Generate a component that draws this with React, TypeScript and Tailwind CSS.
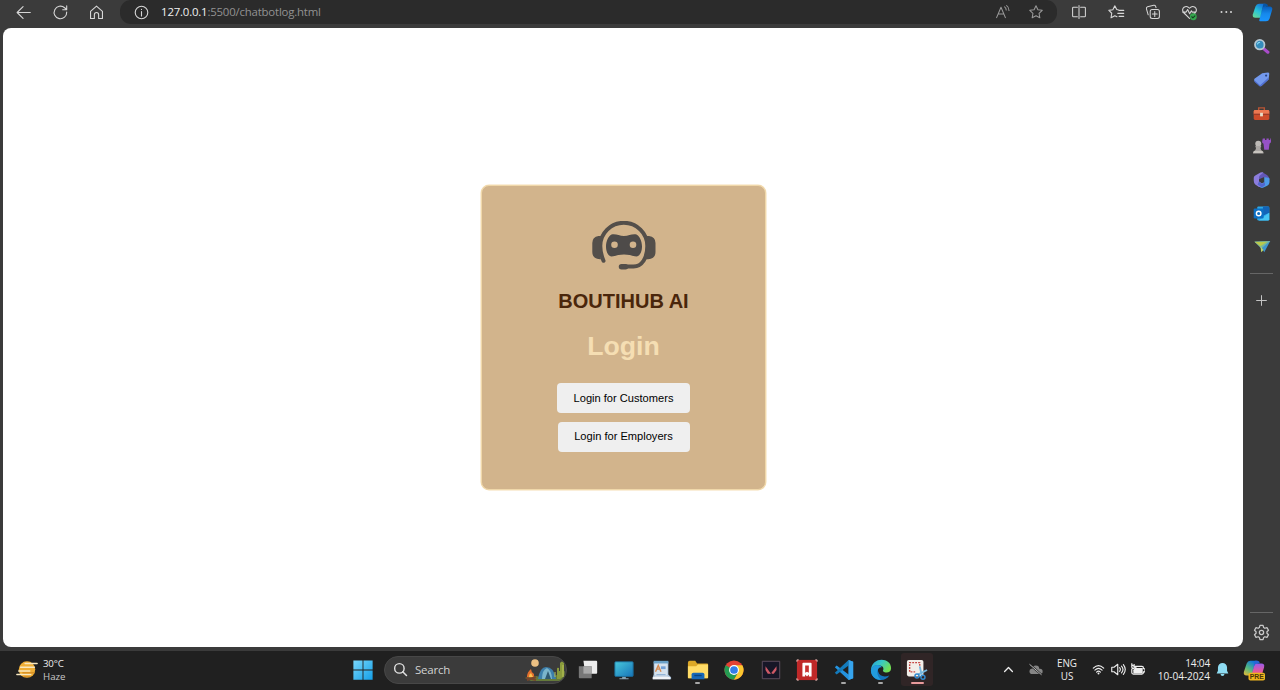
import React from "react";

type P = { children: React.ReactNode; size?: number; className?: string };

/* 20-unit outline icon */
const Line = ({ children, size = 16, className = "" }: P) => (
  <svg width={size} height={size} viewBox="0 0 20 20" fill="none" stroke="currentColor" strokeWidth="1.3" strokeLinecap="round" strokeLinejoin="round" className={`shrink-0 ${className}`}>
    {children}
  </svg>
);

/* 24-unit full colour icon */
const Art = ({ children, size = 22, className = "" }: P) => (
  <svg width={size} height={size} viewBox="0 0 24 24" className={`shrink-0 ${className}`}>
    {children}
  </svg>
);

const Cell = ({ children }: { children: React.ReactNode }) => (
  <div className="flex h-6 w-[36.7px] shrink-0 items-center justify-center">{children}</div>
);

const star = "M10 2.2l2.4 5 5.4.7-4 3.8 1 5.5L10 14.6l-4.8 2.6 1-5.5-4-3.8 5.4-.7z";

function Toolbar() {
  return (
    <header className="flex h-[28px] shrink-0 items-start bg-[#3b3b3b] pl-[5px] text-[#d6d6d6]">
      <Cell><Line size={17}><path d="M18 10H2.500M9.500 3L2.500 10l7 7" /></Line></Cell>
      <Cell><Line size={17}><path d="M17.300 9.500A7.400 7.400 0 1 1 14.800 4.400L17.200 6.500M17.300 2v4.700h-4.700" /></Line></Cell>
      <Cell><Line size={17}><path d="M3 8.600L10 2.500l7 6.100V17h-4.500v-4.500a2.500 2.500 0 0 0-5 0V17H3z" /></Line></Cell>
      <div className="ml-[5px] flex h-6 w-[937px] items-center rounded-[11px] bg-[#2b2b2b] pl-[13px]">
        <Line size={17}><circle cx="10" cy="10" r="7.400" /><path d="M10 9v5M10 6.300v.2" /></Line>
        <div className="ml-[11px] h-[18px] w-[162px] whitespace-nowrap font-['Open_Sans','Noto_Sans',sans-serif] text-[11.4px] leading-[18px] tracking-[-0.19px] text-[#929292]">
          <span className="text-[#f1f1f1]">127.0.0.1</span>:5500/chatbotlog.html
        </div>
        <div className="ml-auto mr-[13px] flex gap-[17px] text-[#9a9a9a]">
          <Line size={16}><path d="M2 17L7.500 4 13 17M4 12.500h7M12 3.500q2 1.500 2 4M14.500 2q3 2 3 6" /></Line>
          <Line size={16}><path d={star} /></Line>
        </div>
      </div>
      <div className="w-1" />
      <Cell><Line size={16}><path d="M8 4H3q-1 0-1 1v10q0 1 1 1h5M12 4h5q1 0 1 1v10q0 1-1 1h-5M10 2v16" /></Line></Cell>
      <Cell><Line size={17}><path d="M12.500 7L10.300 6.500 8 2.200 5.700 6.700l-4.700.8 3.400 3.400-.8 5.300L8 13.800l2.500 1.200M13 7.500h5.500M11.500 11h7M13 14.500h5.500" /></Line></Cell>
      <Cell><Line size={16}><rect x="6.500" y="7" width="11.500" height="11" rx="2.500" /><path d="M12.200 9.500v6M9.200 12.500h6M4 13.500L1.800 6q-.4-2 1.400-2.600L11 1.700q1.700-.3 2.300 1.300l.5 1.500" /></Line></Cell>
      <Cell>
        <Line size={17}>
          <path d="M10 17L3 10C-.8 5 6 .3 10 5c4-4.700 10.800 0 7 5l-2 2M2 9.500h4l1.800-3 2.400 5 2-3.500 1 1.500h4" />
          <circle cx="14.500" cy="15" r="4" fill="#35a64e" stroke="none" /><path d="M12.700 15l1.300 1.300 2.400-2.400" stroke="#163d20" />
        </Line>
      </Cell>
      <Cell><svg width="16" height="16" viewBox="0 0 16 16" fill="currentColor"><circle cx="3.500" cy="8" r="1" /><circle cx="8.300" cy="8" r="1" /><circle cx="13" cy="8" r="1" /></svg></Cell>
      <div className="flex h-[25px] flex-1 items-center justify-center"><Copilot size={21} /></div>
    </header>
  );
}

function Copilot({ size, pro = false }: { size: number; pro?: boolean }) {
  const id = pro ? "pro" : "std";
  return (
    <Art size={size}>
      <defs>
        <linearGradient id={`${id}a`} x1="0" y1="1" x2="0.600" y2="0"><stop stopColor={pro ? "#f2b92f" : "#70dc8f"} /><stop offset=".5" stopColor={pro ? "#53ba80" : "#29c5d8"} /><stop offset="1" stopColor="#1475da" /></linearGradient>
        <linearGradient id={`${id}b`} x1="0" y1="1" x2="0" y2="0"><stop stopColor={pro ? "#f29755" : "#1995ff"} /><stop offset=".5" stopColor={pro ? "#e5599b" : "#1689ec"} /><stop offset="1" stopColor={pro ? "#9a5bea" : "#075cba"} /></linearGradient>
      </defs>
      <path d="M8 2h7q1.500 0 1 2L13 15q-1 3-3 3H4q-4 0-3-4L4 5q1-3 4-3z" fill={`url(#${id}a)`} />
      <path d="M15 5h5q4 0 3 4l-3 10q-1 3-4 3H9q-1 0-.5-2L12 8q1-3 3-3z" fill={`url(#${id}b)`} />
      <path d="M13 2h3q2 0 2.500 3H15q-2 0-3 3l-2.500 9" fill={pro ? "#2965d5" : "#0755a5"} />
      {pro && (
        <>
          <rect x="6" y="15" width="18" height="8.500" rx="2" fill="#efb51e" />
          <text x="15" y="21.800" textAnchor="middle" fontFamily="Liberation Sans, sans-serif" fontSize="7.500" fontWeight="700" fill="#4c3508">PRE</text>
        </>
      )}
    </Art>
  );
}

const SideCell = ({ children }: { children: React.ReactNode }) => (
  <div className="flex h-[33.4px] w-full shrink-0 items-center justify-center">{children}</div>
);

function Sidebar() {
  return (
    <aside className="flex w-[37px] shrink-0 flex-col items-center bg-[#3b3b3b] pt-[1.6px] text-[#c9c9c9]">
      <SideCell><Art size={17}><path d="M15 15l6 5" stroke="#a94bc9" strokeWidth="4.500" strokeLinecap="round" /><circle cx="9.500" cy="9.500" r="6.700" fill="#348bbb" stroke="#b4c6d1" strokeWidth="2.500" /><path d="M6 9q1-3 4-3" stroke="#8ddcf7" strokeWidth="1.500" fill="none" /></Art></SideCell>
      <SideCell><Art size={17}><path d="M13 3l8-1q2 0 2 2l-1 8-10 9q-2 1-3 0l-7-7q-1-1 0-3z" fill="#7399ed" /><path d="M2 13l8 7L22 9v3L12 21q-2 1-3 0l-7-6z" fill="#506fd1" /><circle cx="18.500" cy="6.500" r="1.500" fill="#27407f" /></Art></SideCell>
      <SideCell><Art size={17}><path d="M8 8V4h8v4" fill="none" stroke="#b75434" strokeWidth="2" /><rect x="1" y="7" width="22" height="14" rx="2" fill="#cd4b2a" /><path d="M1 9q0-2 2-2h18q2 0 2 2v4H1z" fill="#ed7750" /><path d="M1 13h22" stroke="#842f23" strokeWidth="1.300" /><rect x="10" y="11" width="4" height="5" fill="#e7ddc8" /></Art></SideCell>
      <SideCell><Art size={18}><path d="M13 2h3v2h2V2h3v2h2V2h1v5l-2 2-1 8H15l-1-8-2-2z" fill="#9652c5" /><circle cx="7" cy="9" r="4" fill="#bcb9b5" /><path d="M3 12h8l-1 3q0 3 4 5v2H0v-2q4-2 4-5z" fill="#aaa6a3" /><path d="M1 20h12" stroke="#dedbd5" strokeWidth="1.500" /></Art></SideCell>
      <SideCell><Art size={18}><path d="M13 2l6 3.500q3 2 3 6L15 8l-7 3V6q0-2 2-3z" fill="#6257b8" /><path d="M22 10v5q0 3-3 4.500L14 22q-2 1-4 0l-4-3 9-4V8l5 1z" fill="#4d9be8" /><path d="M3 6l7-4q2-1 4 0L9 6q-1 1-1 3v5l6 4-4 3q-2 1-4-1l-3-2q-2-2-2-5V9q0-2 2-3z" fill="#8c7ddd" /><path d="M8 14l4 3 4-2v4l-4 3-6-4z" fill="#5267cf" /></Art></SideCell>
      <SideCell><Art size={17}><path d="M7 2h14q2 0 2 2v16q0 2-2 2H8q-2 0-2-2V3z" fill="#2ca8e9" /><path d="M14 2h7q2 0 2 2v7l-9 4z" fill="#1264b8" /><path d="M8 22l15-11v9q0 2-2 2H8z" fill="#45c5f4" /><rect x="1" y="5" width="14" height="14" rx="1.500" fill="#0c70c4" /><circle cx="8" cy="12" r="3.200" fill="none" stroke="white" strokeWidth="2" /></Art></SideCell>
      <SideCell><Art size={18}><path d="M2 5l21-1-8 15-4-7z" fill="#3c94d0" /><path d="M2 5l21-1-12 10z" fill="#77b6a0" /><path d="M2 5l17 0-9 6z" fill="#b9c94c" /><path d="M10 11l1 8 3-3z" fill="#bad467" /></Art></SideCell>
      <div className="mt-[10px] h-px w-[23px] shrink-0 bg-[#666]" />
      <Line size={15} className="mt-[19px]"><path d="M10 3.500v13M3.500 10h13" /></Line>
      <div className="mb-[11px] mt-auto h-px w-[23px] bg-[#666]" />
      <svg width="17" height="17" viewBox="0 0 24 24" className="mb-[10px] shrink-0" fill="none" stroke="currentColor" strokeWidth="1.800" strokeLinejoin="round">
        <path d="M9.800 2h4.400l.8 3 1.700 1 3-.9 2.200 3.800-2.200 2.100v2l2.200 2.100-2.200 3.800-3-.9-1.700 1-.8 3H9.800L9 19l-1.700-1-3 .9-2.200-3.800L4.300 13v-2L2.100 8.900l2.200-3.800 3 .9L9 5z" /><circle cx="12" cy="12" r="3" />
      </svg>
    </aside>
  );
}

function LoginCard() {
  return (
    <section className="-mt-px ml-px flex h-[305px] w-[285px] flex-col items-center rounded-[8px] border-[1.5px] border-[#f0d8aa] bg-[#d2b48c] pt-[35px] font-['Liberation_Sans',Arial,sans-serif] ring-[0.5px] ring-[#f5deb3]">
      <svg width="64" height="49" viewBox="0 0 64 49" className="shrink-0" fill="none">
        <path d="M11.500 39.800Q8.300 32 8.300 25A23.500 23.200 0 0 1 55.300 25C55.300 37 50 45.500 41.500 45.500H31" stroke="#544f4a" strokeWidth="4" strokeLinecap="round" />
        <path d="M29.500 45.700h4" stroke="#544f4a" strokeWidth="5.500" strokeLinecap="round" />
        <path d="M10 15H6.500Q.3 16 .3 22V31Q.3 38 8 38.300H9Q6 26 10 15zM53.500 15H57Q63.500 16 63.500 22V31Q63.500 38 56 38.300H52.500Q57 28 53.500 15z" fill="#544f4a" />
        <path fillRule="evenodd" d="M19.500 13.500C24 12.500 27 15 32 15S40 12.500 44.500 13.500C47.500 15 50 20 50 25.500C50 31 47.500 35.500 44.500 35.500C40 35 38 33.500 32 33.500S24 35 19.500 35.500C16.500 35.500 14 31 14 25.500C14 20 16.500 15 19.500 13.500M22.500 20.400a3.300 3.300 0 1 0 0 6.600a3.300 3.300 0 1 0 0-6.600M41 20.400a3.300 3.300 0 1 0 0 6.600a3.300 3.300 0 1 0 0-6.600" fill="#4e4b49" />
      </svg>
      <h1 className="mt-[19px] text-[20px] font-bold leading-6 text-[#4a260b]">BOUTIHUB AI</h1>
      <h2 className="mt-[17px] text-[26.7px] font-bold leading-8 text-[#f5deb3]">Login</h2>
      <button className="mt-[21px] h-[30px] w-[133px] rounded-[4px] bg-[#efefef] text-[11.1px] leading-[30px] text-black">Login for Customers</button>
      <button className="mt-[9px] h-[30px] w-[132px] rounded-[4px] bg-[#efefef] pb-px text-[11.1px] leading-[29px] text-black">Login for Employers</button>
    </section>
  );
}

function TaskItem({ children, mark }: { children: React.ReactNode; mark?: "idle" | "active" }) {
  return (
    <div className="flex h-[38px] w-[36.6px] shrink-0 items-center justify-center">
      <div className={`relative flex h-[33px] w-8 items-center justify-center rounded-[3px] ${mark === "active" ? "bg-[#302526]" : ""}`}>
        {children}
        {mark === "idle" && <i className="absolute bottom-0.5 h-[2px] w-[5px] rounded-full bg-[#a7a7a7]" />}
        {mark === "active" && <i className="absolute bottom-0.5 h-[2px] w-[13px] rounded-full bg-[#e89a9c]" />}
      </div>
    </div>
  );
}

function Taskbar() {
  return (
    <footer className="flex h-[39px] shrink-0 items-center bg-[#202020] pb-[2px] font-['Open_Sans','Noto_Sans',sans-serif] text-[10px] text-[#eee]">
      <div className="flex w-[352px] items-center pl-4">
        <Art size={22}>
          <circle cx="12" cy="11.500" r="9" fill="#efae35" /><path d="M10 5h13M5 9h15M3 13h12M1 17h15" stroke="#f8e8bf" strokeWidth="1.700" strokeLinecap="round" /><path d="M7 15h13M8 19h8" stroke="#d99125" strokeWidth="1.500" />
        </Art>
        <div className="ml-[5px] text-[9.7px] leading-[13px]"><div className="tracking-[-0.2px]">30°C</div><div className="text-[#c8c8c8]">Haze</div></div>
      </div>
      <Art size={22}>
        <defs><linearGradient id="win" x1="0" y1="0" x2="1" y2="1"><stop stopColor="#79d7fb" /><stop offset="1" stopColor="#149fe8" /></linearGradient></defs>
        <path d="M1.500 1.500h10v10h-10zM12.500 1.500h10v10h-10zM1.500 12.500h10v10h-10zM12.500 12.500h10v10h-10z" fill="url(#win)" />
      </Art>
      <div className="ml-[10px] flex h-[28px] w-[183px] items-center overflow-hidden rounded-full border border-[#474747] bg-[#3b3b3b] pl-[8px]">
        <Line size={15} className="text-[#e0e0e0]"><circle cx="8.500" cy="8.500" r="6.300" strokeWidth="1.900" /><path d="M13 13l5 5" strokeWidth="2" /></Line>
        <span className="ml-[7px] text-[11.5px] tracking-[-0.2px] text-[#d2d2d2]">Search</span>
        <svg width="43" height="26" viewBox="0 0 43 26" className="ml-auto">
          <path d="M2 21Q8 17 17 20T42 14Q42 22 36 24H8z" fill="#657a3b" />
          <path d="M15 22Q17 10 23 10Q31 10 33 22z" fill="#3d7fab" /><path d="M19 22Q19 13 24 11Q29 14 29 22z" fill="#7bb5cb" /><path d="M22 22l3-8 3 8z" fill="#315a70" />
          <path d="M34 22V12q0-2 2-1v3h1V6q2-3 4 0v13l-4 3z" fill="#8a9b3c" /><path d="M32 20v-5M40 20V8" stroke="#bac459" />
          <circle cx="12" cy="6" r="3.800" fill="#ecc083" /><path d="M4 20q0-5 4-8q0 3 3 5v4z" fill="#e26e2d" /><path d="M6 20q0-3 2-4l2 4z" fill="#ffc34f" /><path d="M3 21l10 2M4 23l9-3" stroke="#76462c" strokeWidth="2" />
        </svg>
      </div>
      <div className="ml-[2.5px] flex">
        <TaskItem><Art><path d="M7 2h14q1 0 1 1v12q0 1-1 1H8V9z" fill="#ededed" /><path d="M2 8h14v13H3q-1 0-1-1z" fill="#777" /><path d="M7 8h9v8H7z" fill="#a9a9a9" /></Art></TaskItem>
        <TaskItem><Art><defs><linearGradient id="pc" x1="0" y1="0" x2="1" y2="1"><stop stopColor="#48c8dc" /><stop offset="1" stopColor="#1774b8" /></linearGradient></defs><path d="M10 18h4v3h3v1H7v-1h3z" fill="#8aa1ae" /><rect x="2" y="3" width="20" height="16" rx="1" fill="url(#pc)" stroke="#196793" /></Art></TaskItem>
        <TaskItem><Art><path d="M4 3h16v14l3 3v2H3v-2l1-3z" fill="#acc3db" /><path d="M4 2h16v3H4z" fill="#69a1c8" /><path d="M5 5h14v13H5z" fill="#d5e2ee" /><path d="M6 14l3-7 3 7M7 11h4" stroke="#d58b52" strokeWidth="1.500" fill="none" /><path d="M12 8h5v3h-5" fill="#71a0d6" /><path d="M7 17h10" stroke="#91b3d6" strokeWidth="1.200" /><path d="M3 20l3-1h13l3 1v2H3z" fill="#f1f4f8" /></Art></TaskItem>
        <TaskItem mark="idle"><Art><path d="M1 4q0-2 2-2h6l2 3h11q1 0 1 1v15H1z" fill="#dca827" /><path d="M1 8h9l2-2h11v14q0 1-1 1H2q-1 0-1-1z" fill="#ffdc67" /><path d="M5 17q0-2 2-2h10q2 0 2 2v5H5z" fill="#1668b8" /><path d="M8 18h8" stroke="#0b447e" strokeWidth="1.500" /></Art></TaskItem>
        <TaskItem><Art><circle cx="12" cy="12" r="10.500" fill="#e34134" /><path d="M2.900 6.800A10.500 10.500 0 0 0 12 22.500L16.500 14.600 12 12z" fill="#249b52" /><path d="M21.100 6.800H12l4.500 7.800L12 22.500A10.500 10.500 0 0 0 21.100 6.800z" fill="#fbc82f" /><circle cx="12" cy="12" r="5.400" fill="#fff" /><circle cx="12" cy="12" r="4.200" fill="#347de9" /></Art></TaskItem>
        <TaskItem><Art><path d="M2.500 2.500h19v19h-19z" fill="#171627" stroke="#625163" /><path d="M6 8l6 8h-3.500L6 12zM18 8l-5.500 7 .5 1h2l3-4z" fill="#cf5966" /></Art></TaskItem>
        <TaskItem><Art><rect x="1" y="1" width="22" height="22" fill="#bf2828" /><path d="M1 3V1h2M21 1h2v2M1 21v2h2M21 23h2v-2" stroke="#f2c4bf" fill="none" strokeWidth="1" /><path d="M8 4h8q1 0 1 1v14h-3v-2l-2 2-2-2v2H7V5q0-1 1-1z" fill="#fff" /><path d="M10 7h4v8l-2-1-2 1z" fill="#c73332" /></Art></TaskItem>
        <TaskItem mark="idle"><Art><path d="M17 1l5 2v18l-5 2L2 9l2-2 13 10z" fill="#2493df" /><path d="M17 1L2 15l2 2L17 7z" fill="#137bbd" /><path d="M17 1l5 2v18l-5 2z" fill="#36a4ed" /></Art></TaskItem>
        <TaskItem mark="idle"><Art><defs><linearGradient id="edge" x1="0" y1="0" x2="1" y2=".5"><stop stopColor="#239bdd" /><stop offset=".5" stopColor="#38c8c4" /><stop offset="1" stopColor="#71df53" /></linearGradient></defs><path d="M1 12C2-3 23-2 23 10c0 5-6 6-9 3 2-4-1-6-4-6-5 0-9 5-9 5z" fill="url(#edge)" /><path d="M1 12c2-6 9-7 12-3-3-1-5 2-4 5 1 5 7 6 12 4-2 3-5 5-9 5C5 23 1 18 1 12z" fill="#1375bd" /><path d="M1 12c2-6 9-7 12-3-6-1-7 8-1 14C5 23 1 18 1 12z" fill="#229cdd" /></Art></TaskItem>
        <TaskItem mark="active"><Art><rect x="1" y="1" width="18" height="18" rx="2" fill="#f2eee9" /><path d="M4 14V4h11v4M5 14h5" fill="none" stroke="#c74845" strokeWidth="1.500" strokeDasharray="2 1.200" /><path d="M15 8l2 9M23 12l-10 5" stroke="#74b6df" strokeWidth="2" /><circle cx="12" cy="18.500" r="2.200" fill="none" stroke="#3188ce" strokeWidth="1.600" /><circle cx="18.500" cy="20" r="2.200" fill="none" stroke="#3188ce" strokeWidth="1.600" /></Art></TaskItem>
      </div>
      <div className="ml-auto flex items-center pr-[15px]">
        <Line size={13}><path d="M4 13l6-6 6 6" strokeWidth="2" /></Line>
        <svg width="15" height="13" viewBox="0 0 20 16" className="ml-[13px]"><path d="M4 14a4 4 0 0 1 0-7h2a4.500 4.500 0 0 1 9 0h1a3.500 3.500 0 0 1 0 7z" fill="#858585" /><path d="M2 1l16 14" stroke="#222" strokeWidth="2.500" /><path d="M2 1l16 14" stroke="#bbb" strokeWidth="1.300" /></svg>
        <div className="ml-[13px] w-[22px] text-center text-[9.9px] leading-[13px]">ENG<br />US</div>
        <Line size={13} className="ml-[14px]"><path d="M2 8Q10 0 18 8M4.500 11Q10 5.500 15.500 11M7 14Q10 11 13 14" strokeWidth="1.700" /><circle cx="10" cy="16" r="1.500" fill="currentColor" stroke="none" /></Line>
        <Line size={15} className="ml-[6px]"><path d="M1 7h3l5-4v14l-5-4H1zM11.500 7.500q2 2.500 0 5M14 5.500q4 4.500 0 9M16.500 3.500q5 6.500 0 13" strokeWidth="1.500" /></Line>
        <svg width="14" height="13" viewBox="0 0 18 16" className="ml-[5px]"><path d="M4 4h10q2 0 2 2v1h2v4h-2v1q0 2-2 2H3q-2 0-2-2V7" fill="none" stroke="#eee" strokeWidth="1.500" /><path d="M5 6h10v7H3V9z" fill="#eee" /><path d="M1 0v4q0 3 3 3V1M1 2l6 4" stroke="#eee" strokeWidth="1.500" fill="none" /></svg>
        <div className="ml-[11px] flex w-[54px] flex-col items-end whitespace-nowrap text-[10.1px] leading-[13px] tracking-[-0.05px]"><div className="tracking-[-0.2px]">14:04</div><div>10-04-2024</div></div>
        <svg width="13" height="15" viewBox="0 0 20 22" className="ml-[6px]"><path d="M10 1a7 7 0 0 1 7 7v5l2 4H1l2-4V8a7 7 0 0 1 7-7zM7 18h6q0 3-3 3t-3-3z" fill="#8edcf2" /></svg>
        <div className="ml-[14px]"><Copilot size={22} pro /></div>
      </div>
    </footer>
  );
}

export default function App() {
  return (
    <div className="flex h-[690px] w-[1280px] flex-col overflow-hidden bg-[#3b3b3b]">
      <Toolbar />
      <div className="flex h-[623px] shrink-0">
        <main className="mb-1 ml-[3px] flex w-[1240px] items-center justify-center rounded-[8px] bg-white"><LoginCard /></main>
        <Sidebar />
      </div>
      <Taskbar />
    </div>
  );
}
